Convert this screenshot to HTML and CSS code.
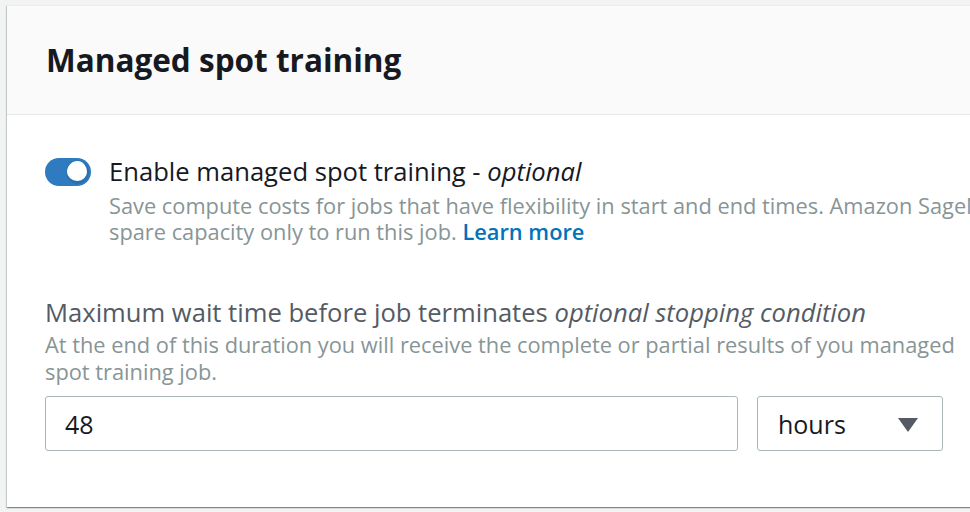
FILE: index.html
```html
<!DOCTYPE html>
<html lang="en">
<head>
<meta charset="utf-8">
<title>Managed spot training</title>
<link rel="stylesheet" href="styles.css">
</head>
<body>
<div class="page">
  <section class="card">
    <header class="card-header">
      <h2 class="card-title">Managed spot training</h2>
    </header>
    <div class="card-body">
      <div class="toggle-row">
        <span class="toggle" role="switch" aria-checked="true"><span class="toggle-knob"></span></span>
        <div class="toggle-text">
          <div class="toggle-label">Enable managed spot training - <em>optional</em></div>
          <div class="desc">Save compute costs for jobs that have flexibility in start and end times. Amazon SageMaker uses<br>spare capacity only to run this job. <a class="link" href="#">Learn more</a></div>
        </div>
      </div>
      <div class="field">
        <div class="field-label">Maximum wait time before job terminates <em>optional stopping condition</em></div>
        <div class="desc">At the end of this duration you will receive the complete or partial results of you managed<br>spot training job.</div>
        <div class="field-controls">
          <div class="input">48</div>
          <div class="select"><span>hours</span><span class="caret"></span></div>
        </div>
      </div>
    </div>
  </section>
</div>
</body>
</html>
```
FILE: styles.css
```css
html, body {
  margin: 0;
  padding: 0;
  overflow: hidden;
}
body {
  background: #f2f3f3;
  font-family: "Open Sans", "Noto Sans", Arial, sans-serif;
  color: #16191f;
  width: 970px;
  height: 512px;
}
.page {
  padding: 5px 0 0 7px;
}
.card {
  width: 1200px;
  height: 501px;
  background: #fff;
  box-shadow: 0 1px 1px 0 rgba(0, 28, 36, 0.3), 1px 1px 1px 0 rgba(0, 28, 36, 0.15), -1px 1px 1px 0 rgba(0, 28, 36, 0.15);
  border-top: 1px solid #eaeded;
}
.card-header {
  height: 108px;
  background: #fafafa;
  border-bottom: 1px solid #e4e8e8;
  display: flex;
  align-items: center;
  padding-left: 39px;
}
.card-title {
  margin: 0;
  font-size: 31.5px;
  font-weight: 700;
  line-height: 40px;
  color: #16191f;
}
.card-body {
  padding: 42px 39px 0 38px;
}
.toggle-row {
  display: flex;
  gap: 18px;
}
.toggle {
  flex: none;
  width: 46px;
  height: 28px;
  border-radius: 14px;
  background: #2f7bc0;
  display: flex;
  align-items: center;
  justify-content: flex-end;
  padding-right: 2px;
  box-sizing: border-box;
  margin-top: 1px;
}
.toggle-knob {
  width: 20px;
  height: 20px;
  border-radius: 50%;
  background: #fff;
  border-style: solid;
  border-width: 1px 2px 3px 1px;
  border-color: #2a70b0;
}
.toggle-label {
  font-size: 25.6px;
  line-height: 30px;
  color: #16191f;
}
em {
  font-style: italic;
}
.desc {
  font-size: 21.8px;
  line-height: 26px;
  color: #879596;
}
.toggle-text .desc {
  margin-top: 6px;
}
.link {
  color: #0073bb;
  font-weight: 600;
  text-decoration: none;
}
.field {
  margin-top: 53px;
}
.field-label {
  font-size: 25.6px;
  line-height: 30px;
  color: #545b64;
}
.field .desc {
  margin-top: 3px;
  line-height: 27px;
}
.field-controls {
  display: flex;
  gap: 19px;
  margin-top: 11px;
}
.input, .select {
  height: 55px;
  box-sizing: border-box;
  border: 1px solid #aab7b8;
  border-radius: 3px;
  font-size: 25px;
  color: #16191f;
  display: flex;
  align-items: center;
}
.input {
  width: 693px;
  padding-left: 19px;
}
.select {
  width: 186px;
  padding: 0 24px 0 20px;
  justify-content: space-between;
}
.caret {
  width: 0;
  height: 0;
  border-left: 10px solid transparent;
  border-right: 10px solid transparent;
  border-top: 14px solid #545b64;
  margin-top: 2px;
}
```
